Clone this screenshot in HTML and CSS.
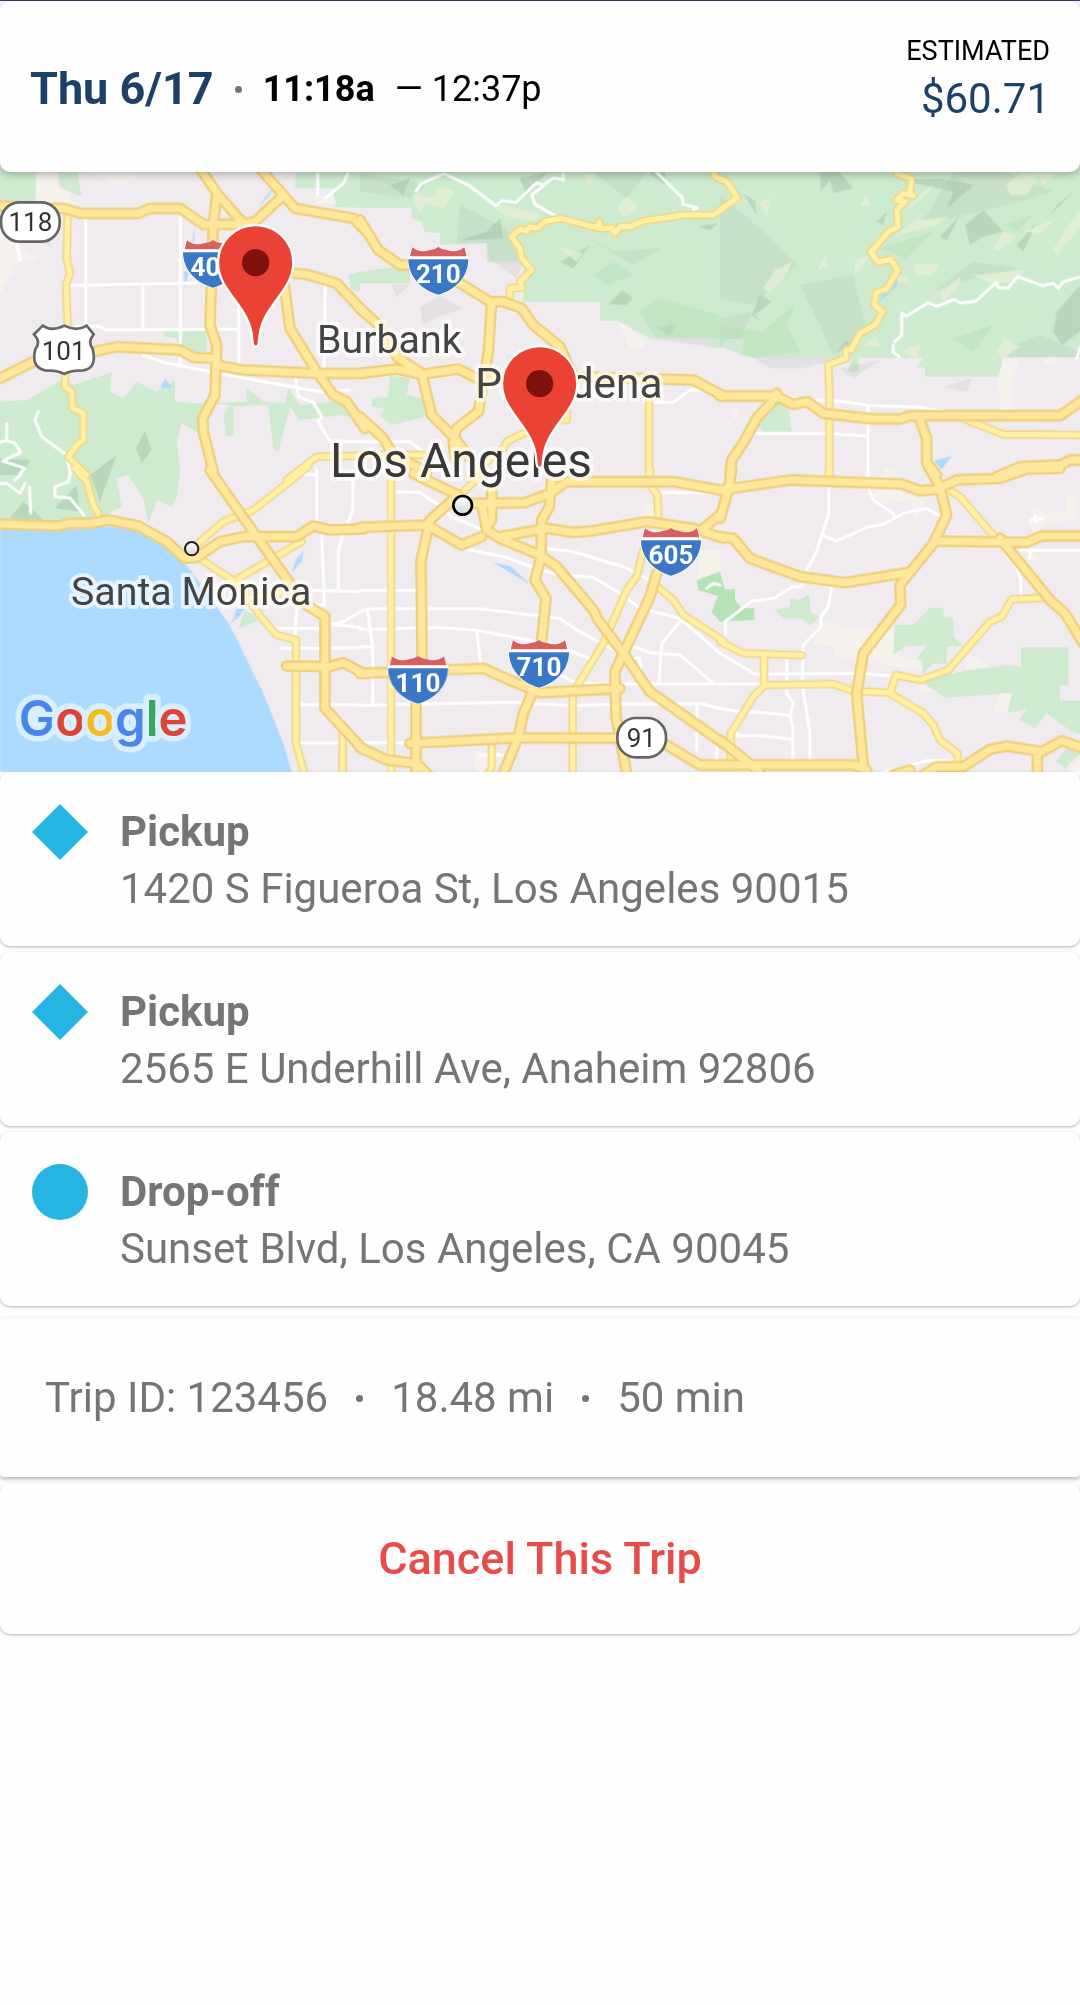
FILE: index.html
```html
<!DOCTYPE html>
<html lang="en">
<head>
<meta charset="utf-8">
<meta name="viewport" content="width=device-width, initial-scale=1">
<title>Trip details</title>
<link rel="stylesheet" href="styles.css">
</head>
<body>
<main class="screen">
  <header class="summary card">
    <div class="when">
      <h1 class="date">Thu 6/17</h1>
      <span class="dot"></span>
      <p class="times"><strong>11:18a</strong><span>— 12:37p</span></p>
    </div>
    <div class="fare">
      <span class="fare-label">ESTIMATED</span>
      <span class="fare-value">$60.71</span>
    </div>
  </header>

  <section class="map" aria-label="Route map">
    <svg class="map-canvas" viewBox="0 -24 3240 1824" role="img" aria-label="Map of Los Angeles">
      <defs>
        <g id="streets">
          <g transform="translate(0 -21)">
            <path d="M257 160V480M541 150V600M428 360V490M208 361L360 358L590 354M230 483L300 485L320 495L716 492M716 430V600M976 365L972 610M430 570L490 592L660 625L820 655L960 680L1050 675M887 640L895 695L940 712L965 755L955 770L990 830H1080M953 22V90M1045 22L1030 55L975 100M50 230L60 285M115 740L105 765L125 815L200 870L212 930M20 775V825L0 832M25 828L45 835L62 862L8 888L75 910L60 925"/>
          </g>
          <g transform="translate(1080 -21)">
            <path d="M168 78L185 55L252 26L325 60L408 122L425 107L468 112L530 53L550 60L580 38L610 45V22M550 62L515 90L525 118L590 155M890 22L968 100V117L1012 128L1000 135M0 830H150L190 860M850 712H940L990 675H1050"/>
          </g>
          <g transform="translate(2160 -21)">
            <path d="M1090 333L1030 350L1015 370L1000 355L968 362L893 335L863 370L835 368L828 352L768 408L722 414L702 403L650 424L625 413L558 454L545 444V510L525 530M520 540V562L538 575M0 680H170L240 705L340 706L440 720L600 727L680 742M444 720V950M110 806H320L425 812H444M1080 550L1070 580"/>
          </g>
          <g transform="translate(0 894)">
            <path d="M950 0V150M900 14H950M1058 20V120L1045 155M1030 190L1015 240V355M0 40H20L60 70L75 40M45 30L65 10M88 50L92 130M212 0L205 35L165 50V80L210 84L252 136M965 190L973 400M920 360L1080 365M915 405H975M820 475H960M985 465L1030 455L1080 425M985 462L1080 472M845 535L1080 533M890 420L885 500M895 704H1080M895 819H1040M690 100L720 130"/>
          </g>
          <g transform="translate(1080 894)">
            <path d="M100 65L178 67L225 98L275 140L370 180M310 235L440 262L540 300L620 320L660 318L700 322L780 370L840 415L960 445L1080 550M560 235L640 245L790 290L900 345M0 361H170M0 425L25 416H360L600 445L650 480L780 550M0 478L230 472L345 480L480 505L600 530L700 570M22 420L38 530V700M0 530H38M350 482L362 580M0 706L260 700L460 697L640 706L800 702H1030L1080 716M590 610L640 635L700 642H1080M960 455L905 520L897 640M740 500L870 548L960 555L1060 640M810 565H840V600M1010 705V840M0 818H140M900 68H1080M1040 355L1060 340L1080 345M360 855H430M1070 830V870"/>
          </g>
          <g transform="translate(2160 894)">
            <path d="M327 50V130L305 195L290 245L260 300L245 350L215 352L160 385L95 393L15 455L18 495L10 515M305 195L350 213L440 172L490 163L550 130L620 116L660 138M444 0V50L460 90L520 130L525 145M335 350L325 410L303 440V470L250 525L246 640L270 790V890M0 550L105 612L400 610L520 617M0 642H130M200 560V670L220 700L210 735L218 770V880M0 716L60 725L130 728L210 737M45 780L55 798L120 796L215 808M855 250L890 290L902 330V380M900 241H1080M480 910L620 872H710M932 150L970 145M945 135L950 155M930 240V265"/>
          </g>
        </g>
        <g id="arterials">
          <g transform="translate(0 -21)">
            <path d="M203 140L200 280L210 325L198 360L203 480M195 625V665L215 680L218 730L250 745V825L235 835L205 875L260 930M860 945L950 875L1080 872"/>
          </g>
          <g transform="translate(1080 -21)">
            <path d="M0 870H190M330 930L430 850L440 830L490 805L560 790M867 700V930M620 690V765H600M1060 20L1065 35L1090 45M1090 130L1060 150L970 150L850 168L810 185L780 185L765 205L755 190L720 190L718 170L712 188L600 160L555 170L530 190L510 185L500 198L480 193L455 215L480 250L485 280L515 315L480 350L485 368L450 370V400"/>
          </g>
          <g transform="translate(2160 -21)">
            <path d="M530 25L575 42L568 90L580 92L550 85L530 105L555 110L530 135L535 185L505 200L453 262L475 292L512 283L533 315L500 372L468 382L463 420L488 440L465 480L420 505L395 553L378 555V580L325 598L328 680V930M740 765L850 808L1090 810M0 135L52 98L20 50L0 42"/>
          </g>
          <g transform="translate(0 894)">
            <path d="M225 -5L260 35L280 105L295 130L290 150M595 220L670 155L760 120L900 10L925 -12M600 265L650 300L700 330L740 380L790 450L830 495L888 510V820L912 910M715 325L810 270L905 215M740 385L840 370M1028 790V910"/>
          </g>
          <g transform="translate(1080 894)">
            <path d="M93 20V910M870 0V45L892 75L895 150M850 240L830 320L800 360L730 520L650 650M638 670V910M892 350L940 390L970 435L1090 512M395 830V890L385 910M310 65L370 10"/>
          </g>
          <g transform="translate(2160 894)">
            <path d="M0 515L70 550L245 556M132 560V640M32 910V790L100 680L135 645L340 642L400 663L510 668L528 615L600 630L685 600L810 455L845 440L875 388L970 384M510 670L610 730L640 765L660 810L713 850V870M680 55L720 80L810 185L840 210M327 0V20"/>
          </g>
        </g>
        <g id="freeways">
          <g transform="translate(0 -21)">
            <path d="M0 122L120 130L190 130L240 145L415 145L450 130L540 130L610 178L720 178L765 170L845 95M650 90L640 180L630 480L650 540L648 600L645 690L608 760L610 800L640 920M600 10L655 90L760 210L850 340L870 490L950 620L1000 690L1040 710L1095 790M780 10L885 130L1060 160L1100 200M885 325L920 328L1010 355L1090 440M0 640L100 590L280 560L350 545L540 555L580 577L648 580L650 600L730 615L950 625H1090"/>
          </g>
          <g transform="translate(1080 -21)">
            <path d="M0 165L55 255L120 300H145L300 355L390 410L430 410L485 430L520 480L600 545L640 635L830 640L1000 645L1090 693M0 430L55 480L110 575L185 625L215 750L285 820L330 880M0 625L110 612L185 628L295 612L350 640H640M395 410L385 560L370 650L355 740L290 790L280 830L285 880M0 755L70 820L100 870L200 920"/>
          </g>
          <g transform="translate(2160 -21)">
            <path d="M0 693H170L220 718L262 710L310 745L460 762L540 762L570 752H1020L1095 700M30 930L35 885L75 825L110 760L165 700L170 685M600 765L620 820V890L650 930M830 935L900 905L1020 900L1050 885H1090"/>
          </g>
          <g transform="translate(0 894)">
            <path d="M0 162L180 168L205 160L270 160L325 150L415 168L500 215L555 265L590 262L660 215L730 200H890L940 168L990 180L1090 177M630 0L770 200L870 340L880 380L975 440V715L1090 840M860 588L990 590L1030 578L1090 610"/>
          </g>
          <g transform="translate(1080 894)">
            <path d="M0 172L200 165L305 225L365 200M160 10L200 30L295 75L210 150L183 270L186 560M168 700V880V910M340 100L495 98L570 70L620 35H940L1090 62M395 60V150L380 170M365 100L380 180L420 205L540 255L590 290L700 420L715 450L790 550L870 665L1090 820M420 200L560 175L640 187L700 182L860 155L1000 175L1090 205M575 30L568 110L545 150L543 260L525 330L558 385L545 510M520 660L490 730L475 800L430 910M1085 130L1030 175M890 310L870 380L790 550L765 605L768 740L800 910M0 610L370 595L460 635L540 668L780 655M0 832L80 870L170 880L210 920M150 820L480 803L850 805L920 825L1020 885H1090"/>
          </g>
          <g transform="translate(2160 894)">
            <path d="M0 145L25 60L35 0M0 60L210 30L545 42L600 62L650 58L710 30L840 25L920 -3L1020 -5M0 200L40 205L90 265L240 320L375 338L560 308M0 810L100 890L120 910M0 885H400L440 900M620 -20L660 50L680 135L640 220L540 345L542 405L430 550L410 670L432 910M650 213L920 217L965 198H1090M840 205L990 390L1035 430L1090 520M520 915L570 900M610 915L650 890L730 890L810 838L860 828L965 845L1025 812L1090 835M952 855V910"/>
          </g>
        </g>
        <g id="interstate">
          <path class="shield-edge" d="M12 3Q50 22 90 2Q130 22 168 3L180 37C180 90 140 130 90 143C40 130 0 90 0 37Z"/>
          <path class="shield-top" d="M5 28L12 1Q35 19 62 10Q78 9 90 0Q102 9 118 10Q145 19 168 1L175 28Z"/>
          <path class="shield-body" d="M0 37H180C180 90 140 130 90 143C40 130 0 90 0 37Z"/>
        </g>
        <g id="pin">
          <path class="pin-body" d="M0 252C-10 252 -10 240 -10 232C-14 130 -113 90 -113 0A113 113 0 0 1 113 0C113 90 14 130 10 232C10 240 10 252 0 252Z"/>
          <circle class="pin-dot" r="41"/>
        </g>
        <linearGradient id="town" x1="0" y1="0" x2="0" y2="1">
          <stop offset="0" stop-color="#ffffff"/>
          <stop offset="1" stop-color="#d8d8d8"/>
        </linearGradient>
      </defs>

      <rect class="land" y="-24" width="3240" height="1824"/>

      <g class="park">
        <path transform="translate(0 -21)" d="M0 -10H110V70L105 125L60 120L0 100ZM170 -10H225L245 95L180 65ZM890 -10H1085V128L1005 126L1000 70L885 70ZM1045 330L1080 320V378L1055 375ZM490 497H620V560H540L530 520L495 515ZM130 230L150 225V240ZM0 710L80 705L195 640L220 660L335 622L330 680L370 700L410 650L470 680L525 645V710L610 716L590 800L545 775L530 830L540 915L530 1000L515 1025L470 1005L445 1075L430 1000L385 930L350 940L365 1025L290 1065L0 1077ZM610 714L740 710V670L790 710L855 715L865 670L900 720L1000 710L1090 750V770L1030 750L900 765L870 725L835 860L820 850L805 720L700 725V810L680 815L670 750L690 720Z"/>
        <path transform="translate(1080 -21)" d="M0 -10H1080V550L1045 545V520H870L775 468H720V410H490V290H380V235H330L240 240V205L195 200L185 170L155 160V128H0ZM0 320L150 300V355H0ZM90 632L150 640L140 690L190 700L195 755L95 780L60 755L75 730L35 725V700L85 695Z"/>
        <path transform="translate(2160 -21)" d="M0 -10H1080V575H845V635H615V610L590 605L610 578H415V620L385 622L395 578H100L60 570L75 522H22L0 550ZM110 780L170 700L205 730L215 800H130Z"/>
        <path transform="translate(2160 894)" d="M165 420L210 410V385L240 390L268 372L272 430L300 440L270 465L240 445H190ZM525 465H580L630 413H672L670 440L700 445V500L730 527L680 530V583L640 580L605 615L610 580L588 568L620 527H560L520 553ZM605 635L720 605L860 585L903 592V532H1046V645H1020V692H1080V792L1055 785L980 730L945 775L897 750L920 718L862 728L875 670L675 683ZM1040 835L1080 850L1035 895L1008 875Z"/>
        <path transform="translate(0 894)" d="M735 420L770 440V455L716 474Z"/>
        <path transform="translate(1080 894)" d="M865 115H885L888 140L865 138ZM1025 245L1050 258L1020 275Z"/>
      </g>
      <path class="park-deep" transform="translate(2160 894)" d="M-70 330L0 305L15 358H45V390L65 415H103V450L0 455L-25 425L-5 378L-65 360Z"/>

      <g class="sand">
        <path transform="translate(0 -21)" d="M110 22H170V60L210 85L200 115H105ZM0 195L40 200V240L110 280V285H60L0 390ZM262 22H410V50L345 60L310 40ZM930 90H1000L1010 115L950 118ZM0 465L18 480L0 475ZM250 120L175 110L170 90Z"/>
        <path transform="translate(1080 -21)" d="M775 468L865 530L825 565L800 530Z"/>
        <path transform="translate(2160 -21)" d="M848 590L900 580L875 650V735L838 738L845 700L828 660ZM960 578H1010V605H985ZM20 735L62 725L45 765ZM490 905L540 930H495Z"/>
        <path transform="translate(2160 894)" d="M300 450L390 475H520V553L605 570L595 602L340 555V530L275 522ZM745 545L810 590L735 600ZM820 725L840 670H875L862 730ZM590 640L650 665L605 665ZM500 0L555 75L620 85L590 155L570 95L480 100L460 75ZM940 105L975 130L1040 125V80H1070V145L990 160L940 190L925 160ZM930 235L965 270H920ZM1060 880L1080 860V910H1040Z"/>
        <path transform="translate(1080 894)" d="M340 840L400 850V910H345ZM860 90L910 130V150L845 140ZM1020 240H1080V300L1010 330Z"/>
      </g>

      <g class="relief-dark">
        <path transform="translate(0 -21)" d="M435 798L455 855L425 895L408 850ZM0 880L90 885L70 930H0ZM270 930L350 870L300 1010ZM165 1030L230 960L240 1040ZM30 1060L70 1010L130 1065Z"/>
        <path transform="translate(1080 -21)" d="M745 418L785 376L820 398L800 420ZM865 22L915 60V22ZM380 200L420 160L430 220L300 225ZM890 490L950 475L930 510ZM90 60L150 40L130 90ZM1010 185L1075 175L1050 195ZM480 40L560 22L500 90ZM600 290L690 240L640 310Z"/>
        <path transform="translate(2160 -21)" d="M540 45L660 40L760 60L680 130L700 80ZM735 180L790 135L850 200L790 215L750 240ZM890 240L950 170L910 260ZM1010 440L1080 360V500L1025 540L1000 500ZM300 22H360L400 70L340 85L330 45L302 80ZM70 85L105 110L110 150ZM120 390L155 410L105 450L130 475L95 450ZM660 215L720 150L680 225ZM470 170L500 140L490 180ZM350 560L380 525L395 550ZM1010 120L1070 70L990 150Z"/>
      </g>
      <g class="relief-mid">
        <path transform="translate(2160 -21)" d="M0 90L120 190L230 300L100 420L0 400ZM240 360L400 330L440 500L340 570L300 480ZM700 22H860L1000 80L820 130L600 180ZM640 380L760 290L900 310L720 350ZM100 578H380L240 610H150ZM360 610L480 585L400 640ZM670 668L755 640L740 680ZM880 540L960 510L1080 560V578H860ZM0 460L100 440L60 520H0Z"/>
        <path transform="translate(1080 -21)" d="M0 22L200 60L150 100L0 80ZM300 120L440 190L480 290L390 290L380 235L290 240ZM620 180L760 260L900 250L820 300ZM95 358L150 358L110 395ZM180 425L240 395L310 430L220 460L190 480ZM870 520H1045V545ZM400 290H490L470 340ZM700 22H860L800 100Z"/>
      </g>
      <g class="relief-green">
        <path transform="translate(1080 -21)" d="M840 440L900 400L1080 450V520H890ZM700 330L760 290L820 330L740 360Z"/>
        <path transform="translate(2160 -21)" d="M0 480L130 500L230 410L200 480L240 560L100 578L0 545ZM480 250L640 200L560 280ZM700 520L820 480L760 560ZM850 180L940 150L890 200Z"/>
      </g>
      <g class="relief-light">
        <path transform="translate(1080 -21)" d="M165 85L210 100L240 68L285 75L250 130L200 115L180 140L160 110ZM380 110L545 150L520 170L440 155ZM770 130L800 95L835 125L820 145L790 155ZM590 245L670 265L650 290ZM670 30L710 22L690 60Z"/>
        <path transform="translate(2160 -21)" d="M570 120L640 55L630 75L560 140ZM520 215L590 165L685 155L650 180ZM860 60L900 25H960L920 90H870ZM950 22H1010L970 60ZM1000 250L1080 130V190L1010 270ZM820 250L850 200L890 215L840 255ZM580 300L655 295L640 330H590ZM120 115L150 95L140 155ZM760 330L920 315L890 345L820 360ZM130 370L165 315L215 290L205 320L150 385ZM405 285L450 270L405 335ZM830 560L855 520L900 545L850 580ZM660 385L720 335V355L670 410ZM540 330L570 345L520 360ZM910 200L1010 160L960 205ZM425 540L470 515L480 545ZM540 560L605 535L590 580ZM290 320L320 270V300ZM420 120L440 90L450 125Z"/>
      </g>

      <g class="water">
        <path d="M0 1065L190 1072L300 1060L400 1070L500 1120L560 1180L600 1235L690 1360L790 1564L850 1714L875 1800H0Z"/>
        <path d="M775 104L838 20L805 75ZM585 160L575 220L580 225ZM550 300L565 300L555 350ZM480 646L495 621L516 648ZM2693 322V340L2640 390L2645 365ZM2803 866L2856 852L2824 893ZM1480 1172L1530 1182L1592 1238ZM912 1135L905 1170L875 1200L890 1160ZM700 1340L710 1310L735 1310L720 1330L690 1358Z"/>
      </g>

      <use href="#streets" class="street"/>
      <use href="#arterials" class="arterial-edge"/>
      <use href="#arterials" class="arterial"/>
      <use href="#freeways" class="freeway-edge"/>
      <use href="#freeways" class="freeway"/>

      <g class="state-route">
        <rect x="3" y="91" width="176" height="118" rx="56"/>
        <text x="91" y="178">118</text>
        <rect x="1852" y="1638" width="146" height="118" rx="56"/>
        <text x="1924" y="1724">91</text>
        <path d="M128 461Q155 480 193 461Q230 480 260 461L281 487Q262 510 278 530Q292 590 250 595Q210 595 193 606Q176 595 135 595Q92 585 106 532Q124 510 102 487Z"/>
        <text x="191" y="565">101</text>
      </g>

      <g class="interstates">
        <use href="#interstate" x="549" y="204"/>
        <text x="639" y="311">405</text>
        <use href="#interstate" x="1225" y="225"/>
        <text x="1315" y="334">210</text>
        <use href="#interstate" x="1923" y="1068"/>
        <text x="2013" y="1176">605</text>
        <use href="#interstate" x="1527" y="1404"/>
        <text x="1617" y="1513">710</text>
        <use href="#interstate" x="1164" y="1452"/>
        <text x="1254" y="1561">110</text>
      </g>

      <g class="places">
        <text x="951" y="544">Burbank</text>
        <text class="suburb" x="1426" y="679">Pasadena</text>
        <text x="213" y="1299">Santa Monica</text>
        <text class="city" x="990" y="914">Los Angeles</text>
      </g>
      <circle class="town-mark" cx="575" cy="1130" r="20"/>
      <circle class="city-mark" cx="1388" cy="1000" r="28"/>

      <use href="#pin" x="767" y="272"/>
      <use href="#pin" x="1619" y="635"/>

      <text class="brand" x="56" y="1692"><tspan class="blue">G</tspan><tspan class="red">o</tspan><tspan class="yellow">o</tspan><tspan class="blue">g</tspan><tspan class="green">l</tspan><tspan class="red">e</tspan></text>
    </svg>
  </section>

  <ul class="stops">
    <li class="stop card">
      <svg class="marker" viewBox="0 0 56 56" aria-hidden="true"><path d="M28 0L56 28L28 56L0 28Z"/></svg>
      <div class="stop-text"><h2>Pickup</h2><p>1420 S Figueroa St, Los Angeles 90015</p></div>
    </li>
    <li class="stop card">
      <svg class="marker" viewBox="0 0 56 56" aria-hidden="true"><path d="M28 0L56 28L28 56L0 28Z"/></svg>
      <div class="stop-text"><h2>Pickup</h2><p>2565 E Underhill Ave, Anaheim 92806</p></div>
    </li>
    <li class="stop card">
      <svg class="marker" viewBox="0 0 56 56" aria-hidden="true"><circle cx="28" cy="28" r="28"/></svg>
      <div class="stop-text"><h2>Drop-off</h2><p>Sunset Blvd, Los Angeles, CA 90045</p></div>
    </li>
  </ul>

  <section class="facts" aria-label="Trip facts">
    <span>Trip ID: 123456</span>
    <span class="dot"></span>
    <span>18.48 mi</span>
    <span class="dot"></span>
    <span>50 min</span>
  </section>

  <button class="cancel card" type="button">Cancel This Trip</button>
</main>
</body>
</html>
```
FILE: styles.css
```css
* {
  box-sizing: border-box;
}

body {
  margin: 0;
  background: #fefefe;
  color: #757575;
  font-family: Roboto, "Liberation Sans", sans-serif;
  font-size: 42px;
  line-height: 56px;
}

h1,
h2,
p,
ul {
  margin: 0;
  padding: 0;
}

.screen {
  display: flex;
  flex-direction: column;
  padding-bottom: 16px;
  border-top: 1px solid #2c4468;
}

.card {
  background: #fefefe;
  border-radius: 10px;
  box-shadow: 0 1px 3px rgba(0, 0, 0, 0.3);
}

.dot {
  flex: none;
  width: 7px;
  height: 7px;
  border-radius: 50%;
  background: #757575;
}

/* Date, time window and fare */
.summary {
  position: relative;
  display: flex;
  justify-content: space-between;
  align-items: flex-start;
  padding: 32px 30px 45px;
  box-shadow: 0 2px 10px rgba(0, 0, 0, 0.3);
}

.when {
  display: flex;
  align-items: center;
  gap: 21px;
  padding-top: 28px;
}

.date {
  color: #1c4068;
  font-size: 45px;
  font-weight: 700;
}

.times {
  display: flex;
  gap: 20px;
  color: #000;
  font-size: 36px;
}

.fare {
  display: flex;
  flex-direction: column;
  align-items: flex-end;
  gap: 2px;
}

.fare-label {
  color: #000;
  font-size: 27px;
  line-height: 36px;
}

.fare-value {
  color: #1c4068;
}

/* Map */
.map {
  margin-top: -8px;
}

.map-canvas {
  display: block;
  width: 100%;
  height: auto;
}

.land { fill: #efebee; }
.park { fill: #ceebcf; }
.park-deep { fill: #b5e3b7; }
.sand { fill: #f5f2ed; }
.water { fill: #addbff; }
.relief-dark { fill: #7f9a86; opacity: 0.25; }
.relief-mid { fill: #b0b4b4; opacity: 0.2; }
.relief-green { fill: #b4dfb8; opacity: 0.45; }
.relief-light { fill: #eaf0d6; opacity: 0.7; }

.street,
.arterial,
.arterial-edge,
.freeway,
.freeway-edge {
  fill: none;
  stroke-linecap: round;
  stroke-linejoin: round;
}

.street { stroke: #fff; stroke-width: 9; }
.arterial-edge { stroke: #f2d684; stroke-width: 25; }
.arterial { stroke: #fff0a6; stroke-width: 15; }
.freeway-edge { stroke: #efcf7b; stroke-width: 35; }
.freeway { stroke: #ffe79c; stroke-width: 21; }

.shield-edge { fill: #fff; stroke: #fff; stroke-width: 4; }
.shield-top { fill: #d4605f; }
.shield-body { fill: #3a78c6; }

.interstates text {
  fill: #fff;
  font-size: 78px;
  font-weight: 700;
  text-anchor: middle;
}

.state-route rect,
.state-route path {
  fill: #fff;
  stroke: #666;
  stroke-width: 8;
}

.state-route text {
  fill: #333;
  font-size: 78px;
  text-anchor: middle;
}

.places text {
  fill: #444;
  stroke: rgba(255, 255, 255, 0.65);
  stroke-width: 24;
  stroke-linejoin: round;
  paint-order: stroke;
  font-size: 118px;
}

.places .suburb {
  font-size: 127px;
}

.places .city {
  fill: #383838;
  font-size: 144px;
}

.town-mark,
.city-mark {
  fill: url(#town);
  stroke: #222;
  stroke-width: 6;
}

.city-mark {
  stroke: #000;
  stroke-width: 8;
}

.pin-body { fill: #ea4335; stroke: #fff; stroke-width: 7; }
.pin-dot { fill: #7f120f; }

.brand {
  stroke: #d9efff;
  stroke-width: 34;
  stroke-linejoin: round;
  paint-order: stroke;
  font-family: Inter, Roboto, sans-serif;
  font-size: 147px;
  font-weight: 600;
}

.blue { fill: #4885ed; }
.red { fill: #db4437; }
.yellow { fill: #f4bc20; }
.green { fill: #3ba55c; }

/* Stops */
.stops {
  display: flex;
  flex-direction: column;
  gap: 6px;
  list-style: none;
}

.stop {
  display: flex;
  align-items: flex-start;
  gap: 32px;
  padding: 32px 32px 29px;
}

.stop-text {
  display: flex;
  flex-direction: column;
  gap: 1px;
}

.stop h2 {
  font-size: 42px;
  font-weight: 700;
}

.marker {
  flex: none;
  width: 56px;
  height: 56px;
  fill: #26b4e3;
}

/* Trip facts */
.facts {
  display: flex;
  align-items: center;
  gap: 28px;
  margin-top: 12px;
  padding: 52px 45px 51px;
  border-radius: 4px;
  background: #fefefe;
  box-shadow: 0 2px 4px rgba(0, 0, 0, 0.3);
}

.cancel {
  margin-top: 6px;
  padding: 48px 32px 47px;
  border: 0;
  color: #e84c49;
  font: inherit;
  font-size: 45px;
  font-weight: 500;
  line-height: 56px;
}
```
